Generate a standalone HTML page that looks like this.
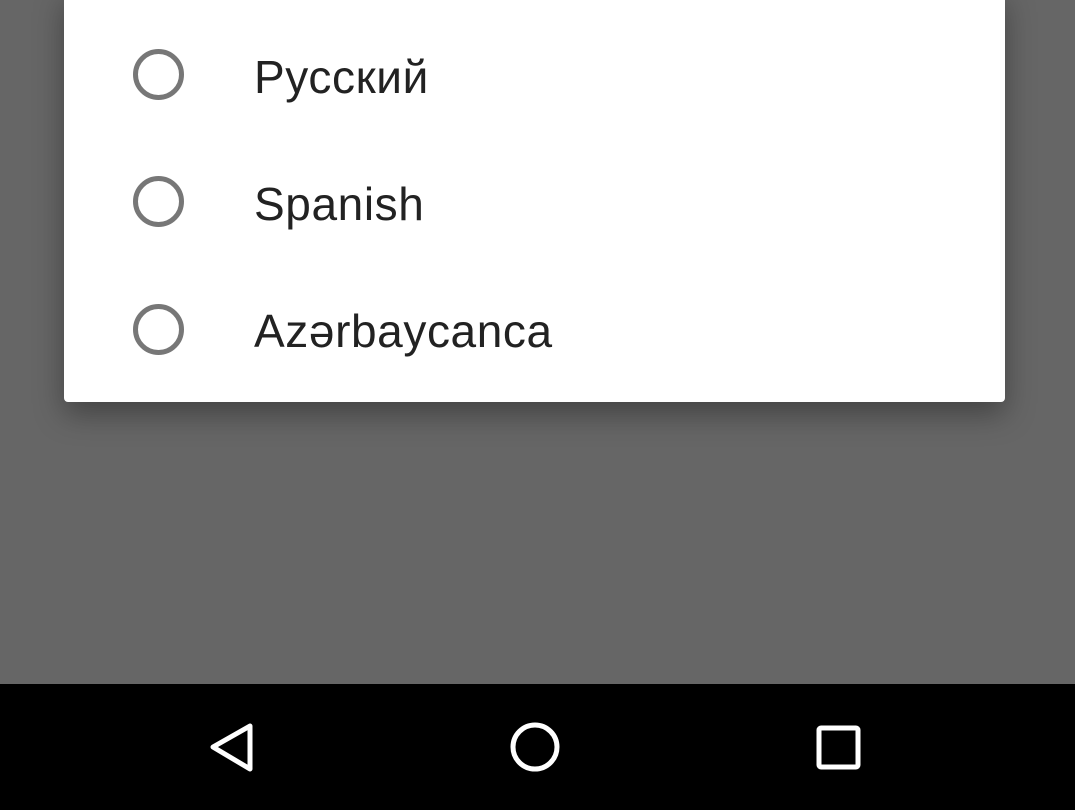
<!DOCTYPE html>
<html><head><style>
html,body{margin:0;padding:0;width:1075px;height:810px;overflow:hidden;background:#666;font-family:"Liberation Sans",Roboto,sans-serif}
.card{position:absolute;left:64px;top:-10px;width:941px;height:412px;background:#fff;border-radius:0 0 4px 4px;box-shadow:0 12px 30px rgba(0,0,0,0.35)}
.r{position:absolute;left:133px;width:41px;height:41px;border:5px solid #777;border-radius:50%}
.t{position:absolute;left:254px;font-size:46px;color:#222;line-height:1;letter-spacing:0.6px}
.nav{position:absolute;left:0;top:684px;width:1075px;height:126px;background:#000}
</style></head><body>
<div class="card"></div>
<div class="r" style="top:49px"></div><div class="t" style="top:54px">Русский</div>
<div class="r" style="top:176px"></div><div class="t" style="top:181px">Spanish</div>
<div class="r" style="top:304px"></div><div class="t" style="top:308px">Azərbaycanca</div>
<div class="nav">
<svg width="1075" height="126" style="position:absolute;left:0;top:0">
<path d="M250 42 L213 63 L250 85 Z" fill="none" stroke="#fff" stroke-width="5" stroke-linejoin="round"/>
<circle cx="535" cy="63" r="22" fill="none" stroke="#fff" stroke-width="5"/>
<rect x="819" y="44" width="39" height="39" rx="2" fill="none" stroke="#fff" stroke-width="5"/>
</svg>
</div>
</body></html>
